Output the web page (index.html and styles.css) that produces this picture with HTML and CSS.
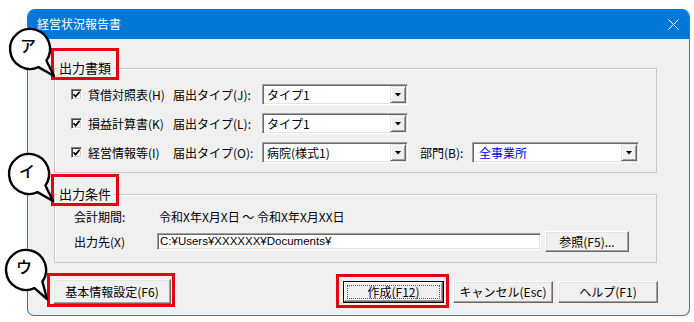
FILE: index.html
```html
<!DOCTYPE html>
<html lang="ja">
  <head>
    <meta charset="UTF-8" />
    <meta name="viewport" content="width=device-width, initial-scale=1.0" />
    <title>経営状況報告書</title>
    <link rel="stylesheet" href="styles.css">
  </head>
  <body>
    <div class="dialog">
      <div class="titlebar">
        <span class="title">経営状況報告書</span>
        <svg class="close" width="11" height="11" viewBox="0 0 11 11">
          <path d="M0.5 0.5L10.5 10.5M10.5 0.5L0.5 10.5" stroke="#fff" stroke-width="1" fill="none" />
        </svg>
      </div>

      <div class="content">
        <fieldset class="group">
          <legend class="mark">出力書類</legend>
          <div class="group-body docs">
            <div class="row">
              <label class="doc"><span class="check"><svg width="9" height="9" viewBox="0 0 9 9"><path d="M1.5 4.2L3.6 6.6L7.6 1.8" stroke="#000" stroke-width="1.7" fill="none" /></svg></span>貸借対照表(H)</label>
              <span class="type-label">届出タイプ(J):</span>
              <div class="select"><span class="value">タイプ1</span><span class="drop"></span></div>
            </div>
            <div class="row">
              <label class="doc"><span class="check"><svg width="9" height="9" viewBox="0 0 9 9"><path d="M1.5 4.2L3.6 6.6L7.6 1.8" stroke="#000" stroke-width="1.7" fill="none" /></svg></span>損益計算書(K)</label>
              <span class="type-label">届出タイプ(L):</span>
              <div class="select"><span class="value">タイプ1</span><span class="drop"></span></div>
            </div>
            <div class="row">
              <label class="doc"><span class="check"><svg width="9" height="9" viewBox="0 0 9 9"><path d="M1.5 4.2L3.6 6.6L7.6 1.8" stroke="#000" stroke-width="1.7" fill="none" /></svg></span>経営情報等(I)</label>
              <span class="type-label">届出タイプ(O):</span>
              <div class="select"><span class="value">病院(様式1)</span><span class="drop"></span></div>
              <span class="dept-label">部門(B):</span>
              <div class="select select-wide"><span class="value value-blue">全事業所</span><span class="drop"></span></div>
            </div>
          </div>
        </fieldset>

        <fieldset class="group group-output">
          <legend class="mark">出力条件</legend>
          <div class="group-body output">
            <span class="out-label">会計期間:</span>
            <span class="period">令和X年X月X日 〜 令和X年X月XX日</span>
            <span class="out-label">出力先(X)</span>
            <div class="path-row">
              <div class="path-input">C:¥Users¥XXXXXX¥Documents¥</div>
              <button class="btn btn-browse">参照(F5)...</button>
            </div>
          </div>
        </fieldset>

        <div class="actions">
          <button class="btn btn-basic mark">基本情報設定(F6)</button>
          <div class="actions-right">
            <button class="btn btn-default mark"><span class="focus">作成(F12)</span></button>
            <button class="btn btn-cancel">キャンセル(Esc)</button>
            <button class="btn btn-help">ヘルプ(F1)</button>
          </div>
        </div>
      </div>
    </div>

    <svg class="bubble bubble-a" width="54" height="54" viewBox="0 0 54 54">
      <path d="M38.4 33.5A20 20 0 1 0 30.5 40.1L46 49Z" fill="#fff" stroke="#000" stroke-width="2.4" stroke-linejoin="round" />
      <text x="20" y="25" text-anchor="middle">ア</text>
    </svg>
    <svg class="bubble bubble-i" width="54" height="54" viewBox="0 0 54 54">
      <path d="M38.4 33.5A20 20 0 1 0 30.5 40.1L46 49Z" fill="#fff" stroke="#000" stroke-width="2.4" stroke-linejoin="round" />
      <text x="20" y="25" text-anchor="middle">イ</text>
    </svg>
    <svg class="bubble bubble-u" width="54" height="54" viewBox="0 0 54 54">
      <path d="M38.4 33.5A20 20 0 1 0 30.5 40.1L43 51Z" fill="#fff" stroke="#000" stroke-width="2.4" stroke-linejoin="round" />
      <text x="20" y="25" text-anchor="middle">ウ</text>
    </svg>
  </body>
</html>
```

FILE: styles.css
```css
* {
  box-sizing: border-box;
}
body {
  margin: 0;
  width: 694px;
  height: 322px;
  overflow: hidden;
  position: relative;
  background: #fff;
  font-family: "Noto Sans CJK JP", "Noto Sans", sans-serif;
  font-size: 12px;
  color: #000;
}
.dialog {
  margin: 9px 0 0 27px;
  width: 663px;
  height: 307px;
  border: 1px solid #1a7fd4;
  border-top: 0;
  border-radius: 8px 8px 7px 7px;
  background: #f0f0f0;
  overflow: hidden;
}
.titlebar {
  height: 30px;
  background: #0078d7;
  color: #fff;
  display: flex;
  align-items: center;
  justify-content: space-between;
  padding: 0 10px 0 9px;
}
.title {
  line-height: 16px;
}
.close {
  display: block;
}
.content {
  padding: 21px 0 0 0;
}

/* group boxes */
.group {
  margin: 0 32px 0 26px;
  padding: 0;
  min-inline-size: 0;
  border: 1px solid #c9c9c9;
  box-shadow: inset 1px 1px #fff;
}
.group legend {
  margin-left: 2px;
  padding: 0 2px;
  font-size: 13px;
  line-height: 16px;
}
.group-output {
  margin-top: 13px;
}
.group-body {
  padding: 8px 0 9px 16px;
}
.docs {
  display: flex;
  flex-direction: column;
  gap: 8px;
}
.row {
  display: flex;
  align-items: center;
  height: 21px;
}
.doc {
  display: flex;
  align-items: center;
  gap: 6px;
  width: 102px;
  white-space: nowrap;
}
.check {
  width: 11px;
  height: 11px;
  background: #fff;
  border: 1px solid;
  border-color: #808080 #fff #fff #808080;
  box-shadow: inset 1px 1px #404040, inset -1px -1px #d4d4d4;
  display: flex;
  align-items: center;
  justify-content: center;
}
.check svg {
  display: block;
}
.type-label {
  width: 89px;
  white-space: nowrap;
}
.dept-label {
  margin-left: 12px;
  width: 52px;
  white-space: nowrap;
}

/* combo boxes */
.select {
  width: 146px;
  height: 21px;
  display: flex;
  padding: 1px;
  background: #fff;
  border: 1px solid;
  border-color: #a0a0a0 #fff #fff #a0a0a0;
  box-shadow: inset 1px 1px #696969, inset -1px -1px #e3e3e3;
}
.select-wide {
  width: 167px;
}
.value {
  flex: 1;
  padding-left: 3px;
  line-height: 17px;
  white-space: nowrap;
}
.value-blue {
  color: #0000ff;
  padding-left: 5px;
}
.drop {
  width: 16px;
  height: 17px;
  background: #f0f0f0;
  border: 1px solid;
  border-color: #e3e3e3 #696969 #696969 #e3e3e3;
  box-shadow: inset 1px 1px #fff, inset -1px -1px #a0a0a0;
  display: flex;
  align-items: center;
  justify-content: center;
}
.drop::after {
  content: '';
  width: 7px;
  height: 4px;
  background: #000;
  clip-path: polygon(0 0, 100% 0, 50% 100%);
}

/* output settings */
.output {
  display: grid;
  grid-template-columns: 83px 1fr;
  row-gap: 6px;
  align-items: center;
  padding: 7px 27px 10px 19px;
}
.period {
  padding-left: 2px;
  line-height: 16px;
}
.out-label {
  line-height: 16px;
}
.path-row {
  display: flex;
  align-items: center;
  gap: 4px;
}
.path-input {
  flex: 1;
  height: 17px;
  padding: 0 2px;
  background: #fff;
  border: 1px solid;
  border-color: #a0a0a0 #fff #fff #a0a0a0;
  box-shadow: inset 1px 1px #696969, inset -1px -1px #e3e3e3;
  font-family: "Liberation Sans", Arial, sans-serif;
  font-size: 11.5px;
  line-height: 15px;
  white-space: nowrap;
}

/* buttons */
.btn {
  font-family: inherit;
  font-size: 12px;
  color: #000;
  background: #f0f0f0;
  border: 1px solid;
  border-color: #fff #696969 #696969 #fff;
  box-shadow: inset -1px -1px #a0a0a0, inset 1px 1px #e3e3e3;
  padding: 0;
  height: 22px;
  line-height: 16px;
}
.btn-browse {
  width: 84px;
  height: 21px;
}
.actions {
  margin-top: 16px;
  padding: 0 31px 0 25px;
  display: flex;
  align-items: center;
  justify-content: space-between;
}
.actions-right {
  display: flex;
  align-items: center;
}
.btn-basic {
  width: 118px;
  height: 25px;
}
.btn-default {
  width: 101px;
  padding: 3px;
  border: 1px solid #000;
  box-shadow: inset -1px -1px #696969, inset 1px 1px #fff, inset -2px -2px #a0a0a0;
}
.focus {
  display: block;
  height: 100%;
  border: 1px dotted #555;
  line-height: 12px;
}
.btn-cancel {
  width: 100px;
  margin-left: 9px;
}
.btn-help {
  width: 100px;
  margin-left: 5px;
}

/* annotation marks */
.mark {
  position: relative;
}
.mark::after {
  content: '';
  position: absolute;
  border: 3px solid #e50012;
  pointer-events: none;
}
.group legend.mark::after {
  inset: -12px -6px -4px -6px;
}
.btn-basic.mark::after {
  inset: -7px -5px -4px -7px;
}
.btn-default.mark::after {
  inset: -8px -6px -6px -8px;
}
.bubble {
  position: absolute;
  overflow: visible;
}
.bubble text {
  font-family: "Noto Sans CJK JP", sans-serif;
  font-size: 16px;
  font-weight: 500;
  fill: #000;
}
.bubble-a {
  left: 8px;
  top: 27px;
}
.bubble-i {
  left: 7px;
  top: 152px;
}
.bubble-u {
  left: 4px;
  top: 248px;
}
```
